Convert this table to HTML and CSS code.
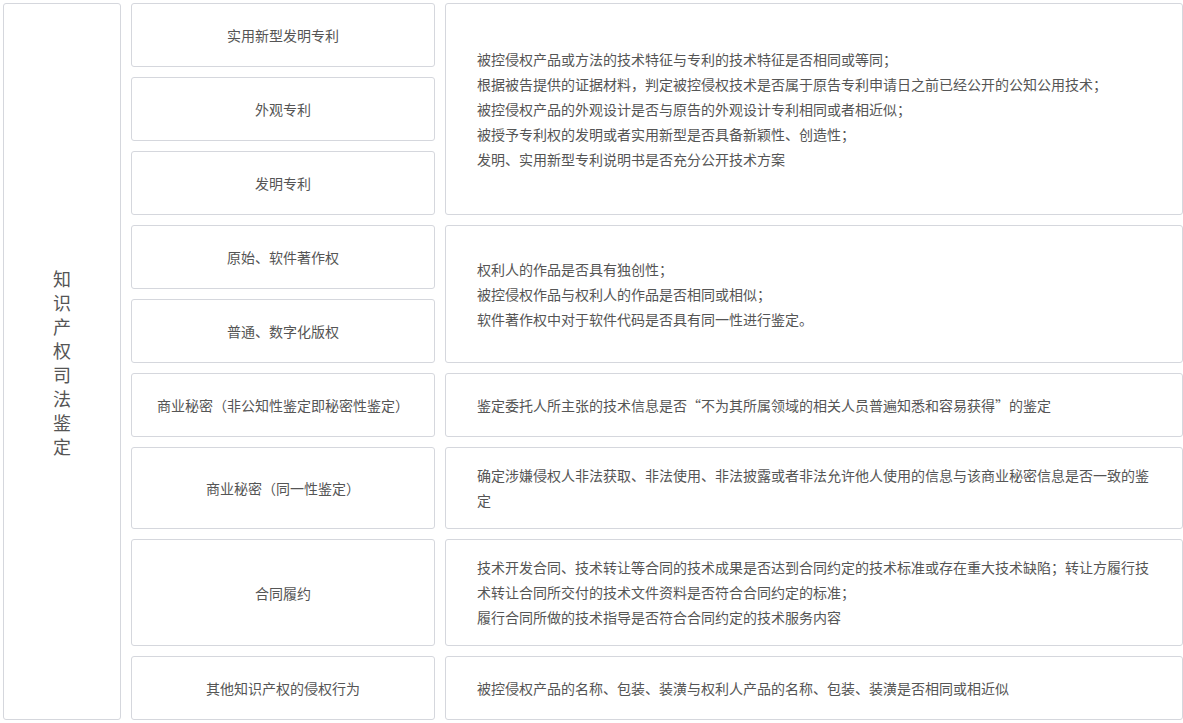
FILE: index.html
```html
<!DOCTYPE html>
<html lang="zh-CN">
<head>
<meta charset="utf-8">
<title>知识产权司法鉴定</title>
<link rel="stylesheet" href="styles.css">
</head>
<body>
<div class="wrap">
  <div class="side box"><span class="side-text">知识产权司法鉴定</span></div>
  <div class="groups">
    <div class="group">
      <div class="items">
        <div class="item box">实用新型发明专利</div>
        <div class="item box">外观专利</div>
        <div class="item box">发明专利</div>
      </div>
      <div class="desc box">
        <p>被控侵权产品或方法的技术特征与专利的技术特征是否相同或等同；</p>
        <p>根据被告提供的证据材料，判定被控侵权技术是否属于原告专利申请日之前已经公开的公知公用技术；</p>
        <p>被控侵权产品的外观设计是否与原告的外观设计专利相同或者相近似；</p>
        <p>被授予专利权的发明或者实用新型是否具备新颖性、创造性；</p>
        <p>发明、实用新型专利说明书是否充分公开技术方案</p>
      </div>
    </div>
    <div class="group">
      <div class="items">
        <div class="item box">原始、软件著作权</div>
        <div class="item box">普通、数字化版权</div>
      </div>
      <div class="desc box">
        <p>权利人的作品是否具有独创性；</p>
        <p>被控侵权作品与权利人的作品是否相同或相似；</p>
        <p>软件著作权中对于软件代码是否具有同一性进行鉴定。</p>
      </div>
    </div>
    <div class="group">
      <div class="items">
        <div class="item box">商业秘密（非公知性鉴定即秘密性鉴定）</div>
      </div>
      <div class="desc box">
        <p>鉴定委托人所主张的技术信息是否“不为其所属领域的相关人员普遍知悉和容易获得”的鉴定</p>
      </div>
    </div>
    <div class="group">
      <div class="items">
        <div class="item box">商业秘密（同一性鉴定）</div>
      </div>
      <div class="desc box">
        <p>确定涉嫌侵权人非法获取、非法使用、非法披露或者非法允许他人使用的信息与该商业秘密信息是否一致的鉴定</p>
      </div>
    </div>
    <div class="group">
      <div class="items">
        <div class="item box">合同履约</div>
      </div>
      <div class="desc box">
        <p>技术开发合同、技术转让等合同的技术成果是否达到合同约定的技术标准或存在重大技术缺陷；转让方履行技术转让合同所交付的技术文件资料是否符合合同约定的标准；</p>
        <p>履行合同所做的技术指导是否符合合同约定的技术服务内容</p>
      </div>
    </div>
    <div class="group">
      <div class="items">
        <div class="item box">其他知识产权的侵权行为</div>
      </div>
      <div class="desc box">
        <p>被控侵权产品的名称、包装、装潢与权利人产品的名称、包装、装潢是否相同或相近似</p>
      </div>
    </div>
  </div>
</div>
</body>
</html>
```

FILE: styles.css
```css
* { box-sizing: border-box; }
html, body { margin: 0; background: #fff; }
body {
  padding: 3px 0 0 3px;
  font-family: "Noto Sans CJK SC", "Noto Sans", sans-serif;
  color: #555;
  font-size: 14px;
}
.wrap {
  display: flex;
  gap: 10px;
  width: 1180px;
}
.box {
  border: 1px solid #d5d7dd;
  border-radius: 3px;
  background: #fff;
}
.side {
  width: 118px;
  flex: none;
  display: flex;
  align-items: center;
  justify-content: center;
}
.side-text {
  width: 18px;
  font-size: 18px;
  line-height: 24px;
  text-align: center;
  color: #555;
}
.groups {
  display: flex;
  flex-direction: column;
  gap: 10px;
  flex: 1;
}
.group {
  display: grid;
  grid-template-columns: 304px 738px;
  gap: 10px;
}
.items {
  display: flex;
  flex-direction: column;
  gap: 10px;
}
.item {
  flex: 1;
  min-height: 64px;
  display: flex;
  align-items: center;
  justify-content: center;
  text-align: center;
  line-height: 20px;
}
.desc {
  padding: 15px 30px 15px 31px;
  display: flex;
  flex-direction: column;
  justify-content: center;
  line-height: 25px;
}
.desc p { margin: 0; }
```
